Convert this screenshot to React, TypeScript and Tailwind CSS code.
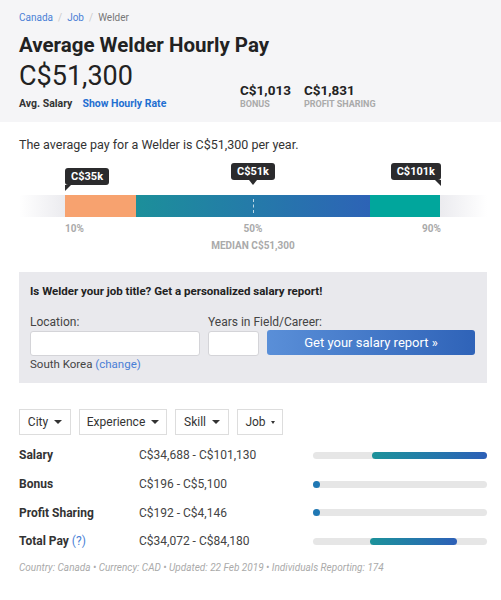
import React from 'react'

const font = { fontFamily: 'Roboto, "Liberation Sans", sans-serif' }

function Tip({ label, tail }: { label: string; tail: 'left' | 'center' | 'right' }) {
  return (
    <div className="relative rounded-[3px] bg-[#2b2b2d] px-[6px] py-[2px] text-[11px] font-bold leading-[13px] text-white">
      {label}
      {tail === 'left' && (
        <span className="absolute left-0 top-full h-0 w-0 border-r-[6px] border-t-[6px] border-r-transparent border-t-[#2b2b2d]" />
      )}
      {tail === 'right' && (
        <span className="absolute right-0 top-full h-0 w-0 border-l-[6px] border-t-[6px] border-l-transparent border-t-[#2b2b2d]" />
      )}
      {tail === 'center' && (
        <span className="absolute left-1/2 top-full h-0 w-0 -translate-x-1/2 border-l-[4px] border-r-[4px] border-t-[5px] border-l-transparent border-r-transparent border-t-[#2b2b2d]" />
      )}
    </div>
  )
}

function Caret({ small }: { small?: boolean }) {
  return small ? (
    <span className="ml-[5px] inline-block h-0 w-0 border-l-[2.5px] border-r-[2.5px] border-t-[3px] border-l-transparent border-r-transparent border-t-[#333]" />
  ) : (
    <span className="ml-[6px] inline-block h-0 w-0 border-l-[4px] border-r-[4px] border-t-[4px] border-l-transparent border-r-transparent border-t-[#333]" />
  )
}

const filters = [
  { label: 'City', w: 'w-[52px]' },
  { label: 'Experience', w: 'w-[88px]' },
  { label: 'Skill', w: 'w-[54px]' },
  { label: 'Job', w: 'w-[46px]', small: true },
]

const rows = [
  { label: 'Salary', value: 'C$34,688 - C$101,130', from: 34, to: 100 },
  { label: 'Bonus', value: 'C$196 - C$5,100', from: 0, to: 0 },
  { label: 'Profit Sharing', value: 'C$192 - C$4,146', from: 0, to: 0 },
  { label: 'Total Pay', value: 'C$34,072 - C$84,180', from: 33, to: 83, help: true },
]

export default function App() {
  return (
    <div className="h-[600px] w-[501px] bg-white text-[#333]" style={font}>
      {/* header */}
      <div className="h-[122px] bg-[#f5f5f7] pl-[19px] pr-[14px] pt-[11px]">
        <div className="text-[10px] leading-[14px] text-[#999]">
          <span className="text-[#4a7fd6]">Canada</span>
          <span className="mx-[5px] text-[#ccc]">/</span>
          <span className="text-[#4a7fd6]">Job</span>
          <span className="mx-[5px] text-[#ccc]">/</span>
          <span className="text-[#777]">Welder</span>
        </div>
        <h1 className="mt-[7px] text-[20.5px] font-bold leading-[26px] text-[#222]">Average Welder Hourly Pay</h1>
        <div className="flex items-end">
          <div className="w-[221px]">
            <div className="text-[27px] leading-[36px] text-[#222]">C$51,300</div>
            <div className="mt-[3px] flex gap-[10px] text-[10.5px] font-bold leading-[14px]">
              <span className="text-[#333]">Avg. Salary</span>
              <span className="text-[#1f6fd1]">Show Hourly Rate</span>
            </div>
          </div>
          <div className="mb-[1px] flex gap-[13px]">
            <div>
              <div className="text-[13.5px] font-bold leading-[16px] text-[#222]">C$1,013</div>
              <div className="text-[9px] font-bold leading-[12px] text-[#aaa]">BONUS</div>
            </div>
            <div>
              <div className="text-[13.5px] font-bold leading-[16px] text-[#222]">C$1,831</div>
              <div className="text-[9px] font-bold leading-[12px] text-[#aaa]">PROFIT SHARING</div>
            </div>
          </div>
        </div>
      </div>

      {/* distribution */}
      <div className="pl-[19px] pr-[14px] pt-[15px]">
        <p className="text-[12.5px] leading-[16px] text-[#333]">The average pay for a Welder is C$51,300 per year.</p>
        <div className="mt-[10px] flex h-[17px] px-[46px]">
          <div className="w-[75px]"><div className="inline-block"><Tip label="C$35k" tail="left" /></div></div>
          <div className="flex flex-1 justify-center"><Tip label="C$51k" tail="center" /></div>
          <div className="flex w-[75px] justify-end"><Tip label="C$101k" tail="right" /></div>
        </div>
        <div className="mt-[15px] flex h-[22px]">
          <div className="w-[46px] bg-gradient-to-r from-white to-[#ebebef]" />
          <div className="w-[71px] bg-[#f7a26f]" />
          <div className="relative w-[234px] bg-gradient-to-r from-[#1c8f9a] to-[#2d63b6]">
            <div className="absolute left-[117px] top-[4px] h-[14px] border-l border-dashed border-white/70" />
          </div>
          <div className="w-[70px] bg-[#01a69c]" />
          <div className="flex-1 bg-gradient-to-r from-[#ebebef] to-white" />
        </div>
        <div className="mt-[6px] flex px-[46px] text-[10px] font-bold leading-[12px] text-[#aaa]">
          <span className="flex-1">10%</span>
          <span className="flex-1 text-center">50%</span>
          <span className="flex-1 text-right">90%</span>
        </div>
        <div className="mt-[5px] text-center text-[10px] font-bold leading-[12px] text-[#aaa]">MEDIAN C$51,300</div>
      </div>

      {/* report form */}
      <div className="ml-[19px] mr-[14px] mt-[20px] h-[111px] bg-[#e9e9ed] px-[11px] pt-[12px]">
        <div className="text-[11.5px] font-bold leading-[14px] text-[#222]">Is Welder your job title? Get a personalized salary report!</div>
        <div className="mt-[17px] flex gap-[8px]">
          <div>
            <div className="text-[12px] leading-[14px] text-[#444]">Location:</div>
            <div className="mt-[2px] h-[25px] w-[170px] rounded-[3px] border border-[#d4d4d8] bg-white" />
            <div className="mt-[1px] text-[11.5px] leading-[14px] text-[#444]">
              South Korea <span className="text-[#4a7fd6]">(change)</span>
            </div>
          </div>
          <div>
            <div className="text-[12px] leading-[14px] text-[#444]">Years in Field/Career:</div>
            <div className="mt-[2px] flex gap-[8px]">
              <div className="h-[25px] w-[51px] rounded-[3px] border border-[#d4d4d8] bg-white" />
              <div className="-mt-[1px] flex h-[25px] w-[208px] items-center justify-center rounded-[3px] bg-gradient-to-r from-[#5a8fd8] to-[#2f63b8] text-[13px] text-white">
                Get your salary report »
              </div>
            </div>
          </div>
        </div>
      </div>

      {/* filters */}
      <div className="mt-[26px] flex gap-[8px] px-[19px]">
        {filters.map(f => (
          <div
            key={f.label}
            className={`flex h-[26px] items-center justify-center border border-[#ddd] bg-white text-[12px] text-[#333] ${f.w}`}
          >
            {f.label}
            <Caret small={f.small} />
          </div>
        ))}
      </div>

      <div className="mt-[6px] pl-[19px] pr-[14px]">
        {rows.map(r => (
          <div key={r.label} className="flex h-[28.7px] items-center">
            <div className="w-[120px] text-[12px] font-bold text-[#333]">
              {r.label}
              {r.help && <span className="font-normal text-[#4a7fd6]"> (?)</span>}
            </div>
            <div className="w-[174px] text-[12px] text-[#444]">{r.value}</div>
            <div className="relative h-[7px] flex-1 rounded-full bg-[#e6e6e6]">
              {r.to > 0 ? (
                <div
                  className="absolute top-0 h-[7px] rounded-full bg-gradient-to-r from-[#1c929a] to-[#2d5fb7]"
                  style={{ left: `${r.from}%`, width: `${r.to - r.from}%` }}
                />
              ) : (
                <div className="absolute left-0 top-0 h-[7px] w-[7px] rounded-full bg-[#1f78b4]" />
              )}
            </div>
          </div>
        ))}
      </div>

      <div className="mt-[6px] px-[19px] text-[10px] italic leading-[12px] text-[#aaa]">
        Country: Canada • Currency: CAD • Updated: 22 Feb 2019 • Individuals Reporting: 174
      </div>
    </div>
  )
}
